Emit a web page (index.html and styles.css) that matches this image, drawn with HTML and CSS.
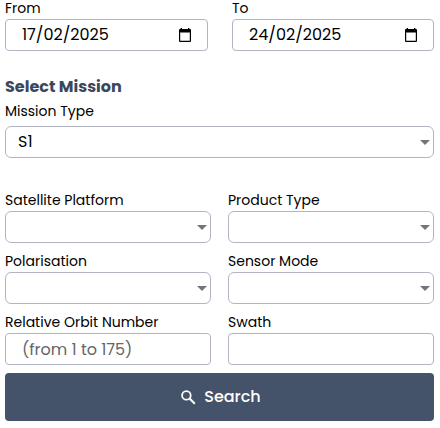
FILE: index.html
```html
<!DOCTYPE html>
<html lang="en">
<head>
<meta charset="utf-8">
<title>Mission search</title>
<link rel="stylesheet" href="styles.css">
</head>
<body>
<form class="search-form">
  <div class="row dates">
    <div class="field">
      <div class="label">From</div>
      <div class="control date"><span>17/02/2025</span><svg class="calendar" viewBox="0 0 12 14"><path fill="#000" fill-rule="evenodd" d="M1.6 0h1.4v1h6V0h1.4v1h.6q1 0 1 1v11q0 1-1 1H1q-1 0-1-1V2q0-1 1-1h.6zM1.2 4.6v8.1h9.6V4.6z"/></svg></div>
    </div>
    <div class="field">
      <div class="label">To</div>
      <div class="control date"><span>24/02/2025</span><svg class="calendar" viewBox="0 0 12 14"><path fill="#000" fill-rule="evenodd" d="M1.6 0h1.4v1h6V0h1.4v1h.6q1 0 1 1v11q0 1-1 1H1q-1 0-1-1V2q0-1 1-1h.6zM1.2 4.6v8.1h9.6V4.6z"/></svg></div>
    </div>
  </div>
  <h2 class="heading">Select Mission</h2>
  <div class="field mission">
    <div class="label">Mission Type</div>
    <div class="control select"><span class="value">S1</span><span class="arrow"></span></div>
  </div>
  <div class="row options">
    <div class="field">
      <div class="label">Satellite Platform</div>
      <div class="control select"><span class="arrow"></span></div>
    </div>
    <div class="field">
      <div class="label">Product Type</div>
      <div class="control select"><span class="arrow"></span></div>
    </div>
    <div class="field">
      <div class="label">Polarisation</div>
      <div class="control select"><span class="arrow"></span></div>
    </div>
    <div class="field">
      <div class="label">Sensor Mode</div>
      <div class="control select"><span class="arrow"></span></div>
    </div>
    <div class="field">
      <div class="label">Relative Orbit Number</div>
      <div class="control"><span class="hint">(from 1 to 175)</span></div>
    </div>
    <div class="field">
      <div class="label">Swath</div>
      <div class="control"></div>
    </div>
  </div>
  <button class="search" type="button"><svg class="glass" viewBox="0 0 15 15" fill="none" stroke="#fff"><circle cx="5.4" cy="5.4" r="4.3" stroke-width="1.8"/><path stroke-width="2.1" d="M8.6 8.6l5.2 5.2"/></svg><span>Search</span></button>
</form>
</body>
</html>
```

FILE: styles.css
```css
* { box-sizing: border-box; }
body {
  margin: 0;
  background: #fff;
  color: #000;
  font-family: Poppins, Inter, sans-serif;
  font-size: 14px;
}
.search-form { width: 429px; margin-left: 5px; }
.row { display: grid; }
.dates { grid-template-columns: 203px 202px; column-gap: 24px; }
.options { grid-template-columns: 206px 206px; column-gap: 17px; row-gap: 8px; margin-top: 32px; }
.label { height: 21px; line-height: 21px; white-space: nowrap; }
.dates .label { height: 19px; line-height: 17px; }
.control {
  display: flex;
  align-items: center;
  height: 32px;
  border: 1px solid #b1b5c3;
  border-radius: 4px;
  padding-left: 16px;
  font-size: 16px;
  line-height: 30px;
  white-space: nowrap;
}
.select { justify-content: flex-end; border-radius: 6px; padding: 0 3px 0 12px; }
.value { margin-right: auto; }
.arrow { border: 5px solid transparent; border-top-color: #757575; border-bottom: 0; }
.date { justify-content: space-between; padding-right: 16px; }
.calendar { width: 12px; height: 14px; }
.heading { margin: 23px 0 0; height: 26px; font-size: 16px; line-height: 26px; font-weight: 700; color: #3a475c; }
.mission .label { height: 26px; line-height: 22px; }
.hint { padding-top: 2px; color: #666; }
.search {
  display: flex;
  align-items: center;
  justify-content: center;
  gap: 8px;
  width: 429px;
  height: 48px;
  margin-top: 8px;
  padding: 0 0 0 3px;
  border: 0;
  border-radius: 4px;
  background: #44536a;
  color: #fff;
  font: 500 16px/24px Poppins, Inter, sans-serif;
}
.glass { width: 15px; height: 15px; }
```
